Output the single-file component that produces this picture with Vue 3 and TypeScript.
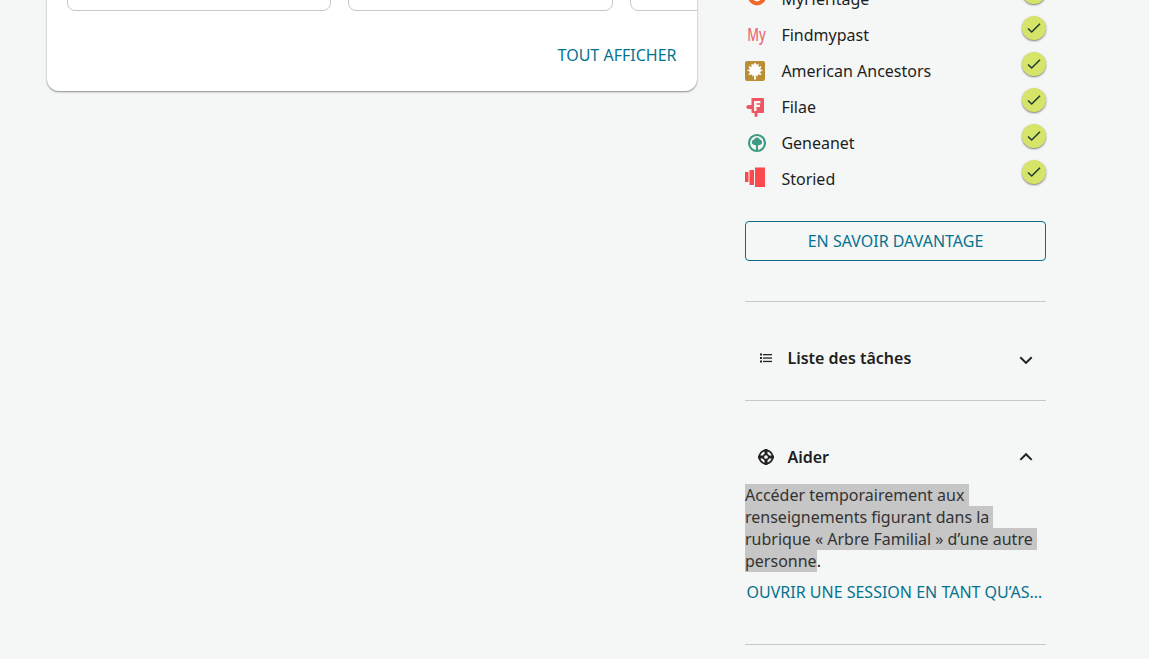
<script setup lang="ts">
import { onMounted, ref } from 'vue'

interface Source {
  name: string
  icon: string
}

const sources: Source[] = [
  { name: 'MyHeritage', icon: 'heritage' },
  { name: 'Findmypast', icon: 'fmp' },
  { name: 'American Ancestors', icon: 'ancestors' },
  { name: 'Filae', icon: 'filae' },
  { name: 'Geneanet', icon: 'geneanet' },
  { name: 'Storied', icon: 'storied' },
]

const selected = ref<HTMLElement | null>(null)

onMounted(() => {
  const sel = window.getSelection()
  if (!sel || !selected.value) return
  const range = document.createRange()
  range.selectNodeContents(selected.value)
  sel.removeAllRanges()
  sel.addRange(range)
})
</script>

<template>
  <div class="page">
    <main class="main">
      <section class="card">
        <div class="tiles">
          <div class="tile"></div>
          <div class="tile"></div>
          <div class="tile"></div>
        </div>
        <div class="card-foot"><a class="link">TOUT AFFICHER</a></div>
      </section>
    </main>

    <aside class="side">
      <ul class="sources">
        <li v-for="s in sources" :key="s.name" class="source">
          <span class="logo" :class="'logo-' + s.icon">
            <svg v-if="s.icon === 'heritage'" width="20" height="20" viewBox="0 0 20 20">
              <circle cx="10" cy="10" r="7" fill="none" stroke="#f2682a" stroke-width="4" />
              <circle cx="10" cy="10" r="2.5" fill="#f2682a" />
            </svg>
            <span v-else-if="s.icon === 'fmp'" class="fmp">My</span>
            <svg v-else-if="s.icon === 'ancestors'" width="20" height="20" viewBox="0 0 20 20">
              <rect width="20" height="20" rx="2" fill="#b98f35" />
              <path d="M10 1.500L11.700 3.800L13.600 2.800L13.400 6L16.600 5L15.200 8.400L18.200 9L15 11L16.600 14L12.800 13.400L12.600 15.600L10.900 14.300L11 18.500H9L9.100 14.300L7.400 15.600L7.200 13.400L3.400 14L5 11L1.800 9L4.800 8.400L3.400 5L6.600 6L6.400 2.800L8.300 3.800Z" fill="#fff" />
            </svg>
            <svg v-else-if="s.icon === 'filae'" width="20" height="20" viewBox="0 0 20 20">
              <path d="M6 1h11.500a1 1 0 0 1 1 1v13a1 1 0 0 1-1 1H12v2.500a1.500 1.500 0 0 1-3 0V16H7a1 1 0 0 1-1-1v-3H3a2 2 0 0 1-1.500-3.500A2 2 0 0 1 3 8h3z" fill="#ee5762" />
              <path d="M8.500 4h6.500v2.200h-4v1.600h3.500V10H11v4H8.500z" fill="#f5f7f6" />
            </svg>
            <svg v-else-if="s.icon === 'geneanet'" width="20" height="20" viewBox="0 0 20 20">
              <circle cx="10" cy="10" r="8" fill="none" stroke="#3d9a84" stroke-width="2.200" />
              <path d="M10 4.500a3 3 0 0 1 2.800 2 2.700 2.700 0 0 1 1 5 2.700 2.700 0 0 1-2.800.6V17H9v-4.900a2.700 2.700 0 0 1-2.800-.6 2.700 2.700 0 0 1 1-5 3 3 0 0 1 2.800-2z" fill="#3d9a84" />
            </svg>
            <svg v-else width="20" height="20" viewBox="0 0 20 20">
              <rect x="0" y="5" width="3.500" height="10" fill="#fb4a4d" />
              <rect x="4.500" y="3" width="4.500" height="15" fill="#fb4a4d" />
              <rect x="10" y="0.500" width="10" height="19.500" fill="#fb4a4d" />
            </svg>
          </span>
          <span class="source-name">{{ s.name }}</span>
          <span class="check">
            <svg width="14" height="14" viewBox="0 0 14 14">
              <path d="M1 7.500l3.700 3.500 8.300-8.200" fill="none" stroke="#1f3d2c" stroke-width="1.600" />
            </svg>
          </span>
        </li>
      </ul>

      <button class="outline" type="button">EN SAVOIR DAVANTAGE</button>

      <section class="panel tasks">
        <header class="panel-head">
          <span class="panel-icon">
            <svg width="16" height="16" viewBox="0 0 16 16" fill="#222">
              <rect x="2" y="3.500" width="2" height="2" />
              <rect x="2" y="7" width="2" height="2" />
              <rect x="2" y="10.500" width="2" height="2" />
              <rect x="5" y="4" width="9" height="1.300" />
              <rect x="5" y="7.400" width="9" height="1.300" />
              <rect x="5" y="10.800" width="9" height="1.300" />
            </svg>
          </span>
          <h3 class="panel-title">Liste des tâches</h3>
          <svg class="chev chev-down" width="16" height="16" viewBox="0 0 16 16">
            <path d="M2.300 5.200L8 10.900l5.700-5.700" fill="none" stroke="#222" stroke-width="2" />
          </svg>
        </header>
      </section>

      <section class="panel help">
        <header class="panel-head">
          <span class="panel-icon">
            <svg width="16" height="16" viewBox="0 0 16 16">
              <circle cx="8" cy="8" r="6.700" fill="none" stroke="#222" stroke-width="1.800" />
              <path d="M8 0v16M0 8h16" stroke="#222" stroke-width="3" />
              <circle cx="8" cy="8" r="2.600" fill="#f5f7f6" stroke="#222" stroke-width="1.500" />
            </svg>
          </span>
          <h3 class="panel-title">Aider</h3>
          <svg class="chev" width="16" height="16" viewBox="0 0 16 16">
            <path d="M2.300 10.900L8 5.200l5.700 5.700" fill="none" stroke="#222" stroke-width="2" />
          </svg>
        </header>
        <p class="help-text"><span ref="selected">Accéder temporairement aux renseignements figurant dans la rubrique «&nbsp;Arbre Familial&nbsp;» d’une autre personne</span>.</p>
        <a class="link help-link">OUVRIR UNE SESSION EN TANT QU’ASSISTANT</a>
      </section>
    </aside>
  </div>
</template>

<style scoped>
.page {
  display: flex;
  align-items: flex-start;
  gap: 48px;
  height: 659px;
  overflow: hidden;
  padding-left: 47px;
  box-sizing: border-box;
  background: #f5f7f6;
  font-family: "Noto Sans", sans-serif;
  font-size: 16px;
  color: #1e1e1e;
}
.main {
  width: 650px;
  flex: none;
}
.card {
  margin-top: -40px;
  height: 131px;
  box-sizing: border-box;
  padding-left: 20px;
  background: #fff;
  border-radius: 12px;
  box-shadow: 0 1px 2px rgba(0, 0, 0, 0.45);
  overflow: hidden;
}
.tiles {
  display: flex;
  gap: 17px;
  overflow: hidden;
}
.tile {
  flex: none;
  width: 265px;
  height: 51px;
  box-sizing: border-box;
  background: #fff;
  border: 1px solid #c8c8c8;
  border-radius: 8px;
}
.tile:first-child {
  width: 264px;
}
.card-foot {
  display: flex;
  justify-content: flex-end;
  padding: 33px 20.5px 0 0;
}
.link {
  color: #05738f;
  line-height: 22px;
}
.side {
  width: 301px;
  flex: none;
  margin-top: -19px;
}
.sources {
  list-style: none;
  margin: 0;
  padding: 0;
}
.source {
  display: flex;
  align-items: center;
  height: 36px;
}
.logo {
  display: flex;
  align-items: center;
  justify-content: center;
  width: 20px;
  height: 20px;
  margin-right: 16.4px;
}
.logo-heritage {
  transform: translate(2px, -2.500px);
}
.logo-geneanet {
  transform: translateX(2px);
}
.logo-storied {
  transform: translateY(-2px);
}
.logo-filae {
  transform: translateX(0.500px);
}
.fmp {
  color: #e86c78;
  font-size: 16px;
  font-weight: 500;
  line-height: 20px;
  transform: translate(2px, -1px) scale(0.8, 1.15);
}
.source-name {
  flex: 1;
  line-height: 22px;
}
.check {
  display: flex;
  align-items: center;
  justify-content: center;
  align-self: flex-start;
  width: 24px;
  height: 24px;
  margin-top: -1px;
  border-radius: 50%;
  background: #d7e46a;
  box-shadow: 0 1px 2px rgba(0, 0, 0, 0.5);
}
.outline {
  display: block;
  width: 100%;
  height: 40px;
  margin-top: 24px;
  padding: 0;
  background: transparent;
  border: 1px solid #0a6d85;
  border-radius: 4px;
  color: #05738f;
  font: inherit;
}
.panel {
  border-top: 1px solid #c8c8c8;
}
.tasks {
  margin-top: 40px;
  height: 99px;
  box-sizing: border-box;
  padding-top: 45px;
}
.help {
  height: 245px;
  box-sizing: border-box;
  padding-top: 45px;
  border-bottom: 1px solid #c8c8c8;
}
.panel-head {
  display: flex;
  align-items: center;
  height: 22px;
  padding: 0 12px 0 13px;
}
.panel-icon {
  display: flex;
  width: 16px;
  height: 16px;
  margin-right: 13.4px;
}
.panel-title {
  flex: 1;
  margin: 0;
  font-size: 16px;
  font-weight: 600;
  line-height: 22px;
}
.chev-down {
  position: relative;
  top: 2px;
}
.help-text {
  margin: 16px 0 0;
  line-height: 22px;
}
.help-text ::selection,
.help-text span::selection {
  background: #c6c6c6;
  color: #333;
}
.help-link {
  display: block;
  margin-top: 9px;
  padding: 0 1.500px;
  overflow: hidden;
  text-overflow: ellipsis;
  white-space: nowrap;
}
</style>

<style>
html,
body {
  margin: 0;
  overflow: hidden;
}
</style>
